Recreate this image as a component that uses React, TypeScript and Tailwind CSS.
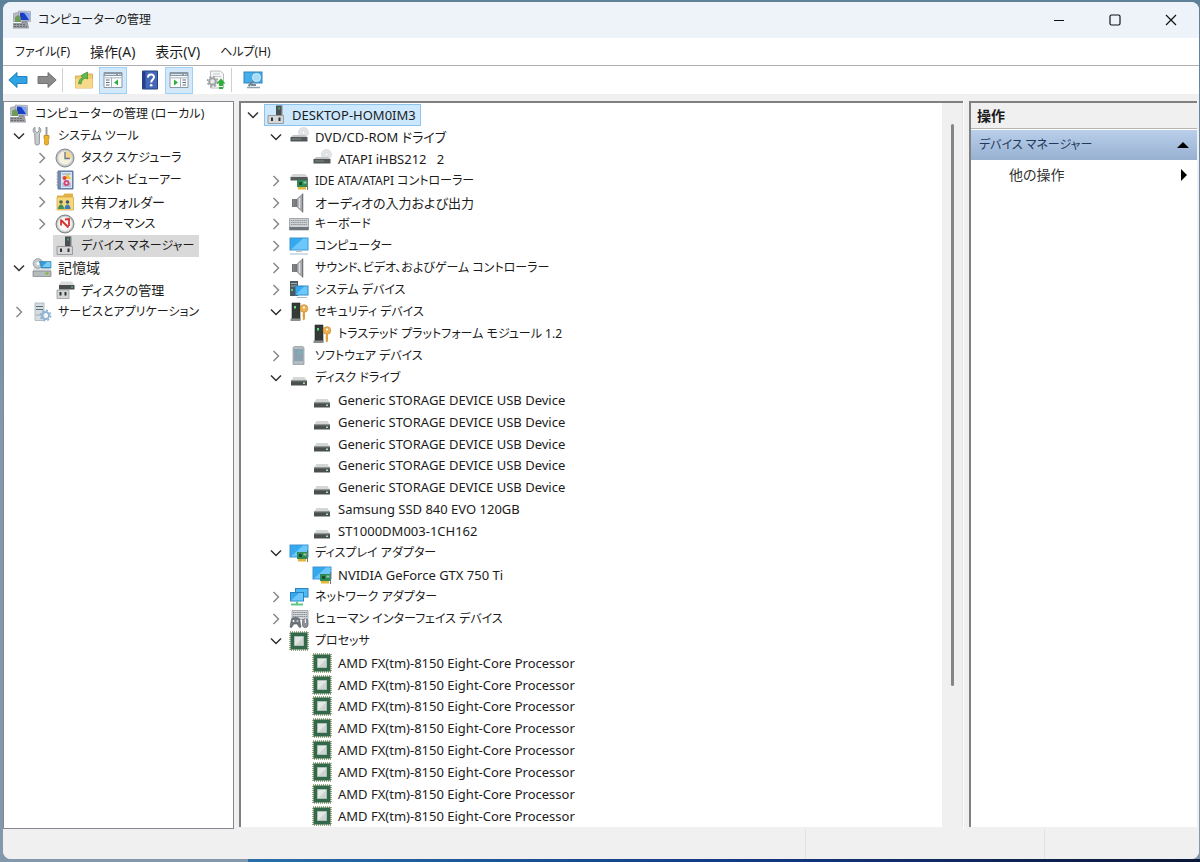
import React from 'react';
import clsx from 'clsx';

type IconName =
  | 'console' | 'tools' | 'clock' | 'event' | 'shared' | 'perf' | 'device' | 'storage' | 'diskmgmt' | 'services'
  | 'dvd' | 'ide' | 'speaker' | 'keyboard' | 'monitor' | 'system' | 'security' | 'software' | 'disk' | 'display'
  | 'network' | 'hid' | 'cpu' | 'back' | 'forward' | 'folderUp' | 'paneLeft' | 'help' | 'paneRight' | 'update' | 'scan';

type State = 'open' | 'closed' | 'leaf';
type Size = 12 | 13 | 14;

interface TreeNode {
  level: number;
  icon: IconName;
  label: string;
  state: State;
  size?: Size;
  selected?: boolean;
}

const TEXT: Record<Size, string> = { 12: 'text-[12px]', 13: 'text-[13px]', 14: 'text-[14px]' };

const device = (
  <>
    <path d="M10 0.5h6v10h-6z" fill="#4c4f52" />
    <path d="M12 2.5h2v2h-2z" fill="#3fa46a" />
    <path d="M15 0.5h1.5v10H15z" fill="#7b7e80" />
    <path d="M2 10.5h15.5v8H2z" fill="#d4d6d7" stroke="#8a8d8f" strokeWidth="0.8" />
    <path d="M5 12.5h2v3.5H5zM12.5 12.5h2v3.5h-2z" fill="#303335" />
  </>
);

const consoleIcon = (
  <>
    <path d="M6.5 1l12 .5v10l-12-.5z" fill="#c9cdd6" stroke="#8b909c" strokeWidth="0.6" />
    <path d="M8 2.5l9.2.4v7.4L8 10z" fill="#1a3fc4" />
    <path d="M12 2.7l5.2.2v7.4z" fill="#7fa6f0" />
    <path d="M1.5 3.5l4-1 1.5 1v8H1.5z" fill="#b9bcc3" stroke="#7d8088" strokeWidth="0.5" />
    <path d="M3 7l3-2 3 2.5V12H3z" fill="#6f9a58" />
    <path d="M10 11h5l1 2h-7z" fill="#8f939b" />
    <path d="M1 13h15l1 5.5H1z" fill="#9a9da1" />
    <path d="M2 14.5h12M2 16.5h13" stroke="#686b6f" strokeDasharray="2 1" />
  </>
);

const screen = (
  <>
    <path d="M.5 1.500h19v13H.5z" fill="#3f93cd" />
    <path d="M1.500 2.500h17v11h-17z" fill="#35a9ee" />
    <path d="M2 13.500L14 2.500h4.500v11z" fill="#6cc8fa" />
  </>
);

const card = (
  <>
    <path d="M8 9h11v7H8z" fill="#2f8a55" />
    <path d="M10 11h3v3h-3z" fill="#1a4d32" />
    <path d="M14.5 10.5h3v2h-3z" fill="#8ed0a4" />
    <path d="M9 16h8v2.5H9z" fill="#e2b638" />
    <path d="M18.5 7v12" stroke="#6d7478" />
  </>
);

const drive = (
  <>
    <path d="M4.500 9h11l2.500 4H2z" fill="#d3d7d5" />
    <path d="M2 12.500h16v5H2z" fill="#4a504f" />
    <path d="M2 12.800h16" stroke="#929896" />
    <path d="M14 15.200h2" stroke="#a5e0b8" strokeWidth="1.500" />
  </>
);

const paneFrame = (
  <>
    <path d="M1 2.5h18v15H1z" fill="#fbfcfd" stroke="#8b98a5" />
    <path d="M1 3h18v3H1z" fill="#8b98a5" />
    <path d="M2 4.5h11" stroke="#dbe3ea" />
    <path d="M15 4.5h3" stroke="#f3f6f8" strokeDasharray="1 0.6" />
    <path d="M1.500 7h17v1.500h-17z" fill="#c3cad1" />
  </>
);

const ICONS: Record<IconName, React.ReactNode> = {
  console: consoleIcon,
  device,
  tools: (
    <>
      <path d="M3 1.2v4l2 1.5 2-1.5v-4c2 1 2.6 4 .6 6.2L7.3 18c-.3 1.4-3.8 1.4-4.2 0L2.7 7.400C.4 5.500.7 2.200 3 1.200z" fill="#c8ccce" stroke="#808588" strokeWidth="0.8" />
      <path d="M13.500 1h2v9h-2z" fill="#9a9ea1" />
      <path d="M12 9.500h5v3l-.6 1v4.500c0 1.300-3.800 1.300-3.800 0v-4.500l-.6-1z" fill="#f0b429" stroke="#b87d12" strokeWidth="0.7" />
    </>
  ),
  clock: (
    <>
      <circle cx="10" cy="10" r="9" fill="#c0c4c8" stroke="#85898d" />
      <circle cx="10" cy="10" r="7" fill="#f5f1df" stroke="#d7d9da" />
      <path d="M10 10V3a7 7 0 0 1 7 7z" fill="#f3d58e" />
      <path d="M10 4v6.500h5" fill="none" stroke="#66758a" strokeWidth="1.300" />
    </>
  ),
  event: (
    <>
      <path d="M3 1h15v18H3z" fill="#6f8db8" stroke="#5d749a" />
      <path d="M6 2h11v16H6z" fill="#dbe5f3" />
      <path d="M7 4h9M7 14h9M7 16h9" stroke="#8da4c6" />
      <path d="M1.500 3h3M1.500 6h3M1.500 9h3M1.500 12h3M1.500 15h3" stroke="#8b9096" />
      <path d="M12.500 3.500l3.500 5.500h-6.500z" fill="#f2c42f" />
      <circle cx="9.500" cy="8" r="2" fill="#d8453a" />
      <circle cx="11.500" cy="13" r="3" fill="#d2487c" />
      <circle cx="11.500" cy="13" r="1" fill="#fff" />
    </>
  ),
  shared: (
    <>
      <path d="M2 3.500h6l1.500-2h8.500v5H2z" fill="#e2b34c" />
      <path d="M2 5h16.500v13H2z" fill="#f7d878" stroke="#d2a13d" strokeWidth="0.7" />
      <circle cx="6" cy="10" r="1.800" fill="#4a6a4e" />
      <path d="M3 17c0-6 6-6 6 0z" fill="#3f8f5a" />
      <circle cx="12.500" cy="10" r="1.800" fill="#35577f" />
      <path d="M9.500 17c0-6 6-6 6 0z" fill="#3c7cbc" />
    </>
  ),
  perf: (
    <>
      <circle cx="10" cy="10" r="9" fill="#b8bbbd" stroke="#7d8082" />
      <circle cx="10" cy="10" r="7.200" fill="#fbf7f6" stroke="#e1e3e4" />
      <path d="M6 5.500v6M6 6l7.500 7.500M10 5.500l4-.5v7" fill="none" stroke="#d5302b" strokeWidth="1.800" />
    </>
  ),
  storage: (
    <>
      <path d="M2 9h16l1 4.500H1z" fill="#dfe2e3" />
      <path d="M1 13h18v5.500H1z" fill="#b5babc" stroke="#7b8083" strokeWidth="0.7" />
      <path d="M13.500 14.500h3v2h-3z" fill="#7fb832" />
      <circle cx="6" cy="5.500" r="4.800" fill="#c5ccd1" stroke="#9aa1a6" />
      <circle cx="6" cy="5.500" r="1.500" fill="#fff" />
      <path d="M7.500 3.500h11.500v6.500h-9.500z" fill="#2f9edb" stroke="#2578a8" strokeWidth="0.6" />
      <path d="M10 9l5-5h3.500v5z" fill="#7cc9f2" />
    </>
  ),
  diskmgmt: (
    <>
      <path d="M6 1.500h11l2 3.500H4z" fill="#d9dcdb" />
      <path d="M4 5h15.500v4.500H4z" fill="#484d4c" />
      <path d="M16 7h2" stroke="#63d68a" />
      <path d="M2 10h12v8.500H2z" fill="#d4d6d7" stroke="#8a8d8f" strokeWidth="0.7" />
      <path d="M4.500 12h2v3.500h-2zM9.500 12h2v3.500h-2z" fill="#303335" />
    </>
  ),
  services: (
    <>
      <path d="M3 1h9v17.500H3z" fill="#d5dde1" stroke="#a5b1b7" strokeWidth="0.8" />
      <path d="M4 4.500h7M4 7.500h7" stroke="#57707e" />
      <path d="M4 13h5" stroke="#9fb0b8" />
      <circle cx="13.500" cy="13.500" r="3.500" fill="none" stroke="#8fb3d0" strokeWidth="2" />
      <circle cx="13.500" cy="13.500" r="5.200" fill="none" stroke="#8fb3d0" strokeWidth="1.500" strokeDasharray="2 2.080" />
      <circle cx="13.500" cy="13.500" r="1.600" fill="#edf4fa" />
    </>
  ),
  dvd: (
    <>
      <circle cx="14.500" cy="5.500" r="5" fill="#e3e4e8" stroke="#d0d2d7" strokeWidth="0.6" />
      <circle cx="14.500" cy="5.500" r="1.500" fill="#fff" stroke="#c0c2c7" strokeWidth="0.5" />
      <path d="M4 8h12l2.500 2.500h-17z" fill="#c2c5c5" />
      <path d="M1.500 10h17v4.500h-17z" fill="#515657" />
      <path d="M3 12h9" stroke="#838889" />
    </>
  ),
  ide: (
    <>
      <path d="M4 3h12l3 3H1z" fill="#d3d6d5" />
      <path d="M1.500 6h17v3.500h-17z" fill="#555b5a" />
      {card}
    </>
  ),
  speaker: (
    <>
      <path d="M3 6h5v8H3z" fill="#6d7174" />
      <path d="M8 6l6-5.500v19L8 14z" fill="#a6aaad" stroke="#7f8386" strokeWidth="0.6" />
      <path d="M4.500 6v8M6 6v8" stroke="#9da1a4" strokeWidth="0.5" />
      <path d="M10.500 5v10" stroke="#dee0e1" strokeWidth="1.500" />
      <path d="M13.500 1v18" stroke="#6f7376" />
    </>
  ),
  keyboard: (
    <>
      <path d="M.5 4.500h19v11.500H.5z" fill="#cfd3d6" stroke="#868c91" strokeWidth="0.7" />
      <path d="M2 6.500h16M2 8.500h16M2 10.500h16" stroke="#8f969b" strokeDasharray="1.500 0.600" />
      <path d="M.5 13h19v3H.5z" fill="#6e767b" />
    </>
  ),
  monitor: (
    <>
      {screen}
      <path d="M7 14.500h6v1.500H7z" fill="#b9c4cb" />
      <path d="M1 18h18" stroke="#a2bccd" />
    </>
  ),
  system: (
    <>
      <path d="M1 1h8v15H1z" fill="#4d585f" />
      <path d="M2 3.500h6M2 6h6" stroke="#a2aeb5" />
      <path d="M2 9h2v2H2z" fill="#5ccb83" />
      <path d="M6 5.500h13.500v10H6z" fill="#2f85bd" />
      <path d="M7 6.500h11.500v8H7z" fill="#35a9ee" />
      <path d="M7 14.500l8-8h3.500v8z" fill="#6cc8fa" />
      <path d="M8 17.500h10" stroke="#a2bccd" />
    </>
  ),
  security: (
    <>
      <path d="M3 1h8v17H3z" fill="#343a36" stroke="#22282a" strokeWidth="0.6" />
      <path d="M5 4h2v2.500H5z" fill="#5be07e" />
      <path d="M1.500 16.500h10V19h-10z" fill="#8a8f8d" />
      <circle cx="15" cy="6.500" r="3.800" fill="#ecb14c" stroke="#c98f3c" strokeWidth="0.8" />
      <circle cx="15" cy="5.500" r="1.100" fill="#fff" />
      <path d="M14 10h2v7l-1.200 1.500L13.500 17l.7-1-.7-1.500z" fill="#e2a03a" />
    </>
  ),
  software: (
    <>
      <path d="M4 1.500l1.500-1h8l1.500 1v17H4z" fill="#b4bcc1" stroke="#8b959b" strokeWidth="0.7" />
      <path d="M5 3h9v12H5z" fill="#8ba3b1" />
      <path d="M9.500 5h2v2h-2z" fill="#54c5dc" />
    </>
  ),
  disk: drive,
  display: (
    <>
      {screen}
      {card}
    </>
  ),
  network: (
    <>
      <path d="M6 1h13.500v9.500H6z" fill="#2a82bf" />
      <path d="M7 2h11.500v7.500H7z" fill="#4fb9f3" />
      <path d="M1 5h14v9.500H1z" fill="#2a82bf" />
      <path d="M2 6h12v7.500H2z" fill="#35a9ee" />
      <path d="M2 13.500L10 6h4v7.500z" fill="#6cc8fa" />
      <path d="M8 14.500v3.500M2 17.500h12" stroke="#5fc885" strokeWidth="2" />
    </>
  ),
  hid: (
    <>
      <path d="M3 1.500h16v9H3z" fill="#d5d8da" stroke="#8c9297" strokeWidth="0.7" />
      <path d="M4 3.500h14M4 5.500h14M4 7.500h14" stroke="#868c91" strokeDasharray="1.500 0.600" />
      <path d="M1 18l1.500-8c1-2 7-2 8 0L12 18c-1.500 1.500-3-1-3.500-3h-4C4 17 2.500 19.500 1 18z" fill="#70777c" stroke="#4a5055" strokeWidth="0.6" />
      <circle cx="4.500" cy="12" r="1" fill="#fff" />
      <circle cx="8.500" cy="12" r="1" fill="#c9cdd0" />
      <path d="M13.500 12c0-3 5.500-3 5.500 0v4c0 3.500-5.500 3.500-5.500 0z" fill="#8b9196" stroke="#50565b" strokeWidth="0.6" />
      <path d="M16.300 10v4" stroke="#fff" />
    </>
  ),
  cpu: (
    <>
      <path d="M1 1h18v18H1z" fill="none" stroke="#7f8f55" strokeWidth="1.500" strokeDasharray="1 1" />
      <path d="M1.500 1.500h17v17h-17z" fill="#33694a" />
      <path d="M5.500 5.500h9v9h-9z" fill="#e3e7e5" stroke="#a9c0b2" />
      <path d="M6.500 14l7.500-7.500V14z" fill="#cdd4d0" />
    </>
  ),
  back: <path d="M.8 10L9 2.500v4h10v7H9v4z" fill="#2ea3e6" stroke="#1c78b8" strokeWidth="0.9" />,
  forward: <path d="M19.200 10L11 2.500v4H1v7h10v4z" fill="#8b8b8b" stroke="#6a6a6a" strokeWidth="0.9" />,
  folderUp: (
    <>
      <path d="M1.500 6h7l1.500-2h8.500v14h-17z" fill="#f0cc6c" stroke="#cda241" strokeWidth="0.8" />
      <path d="M1.500 9h17v9h-17z" fill="#f7d98a" />
      <path d="M4.500 13.500c1-4.500 2.500-5.500 4.500-6L7 5.500l6.500-3.500v7l-2.300-1C8.500 9 7.500 11 7 14z" fill="#5fbf4a" stroke="#3f8a33" strokeWidth="0.7" />
    </>
  ),
  paneLeft: (
    <>
      {paneFrame}
      <path d="M3 10h3.500M3 12.500h3.500M3 15h3.500" stroke="#5c6b7a" />
      <path d="M8.500 8v9.500" stroke="#a7b1bb" />
      <path d="M15 9.500v6l-4-3z" fill="#2fae3b" />
    </>
  ),
  paneRight: (
    <>
      {paneFrame}
      <path d="M13.500 10H17M13.500 12.500H17M13.500 15H17" stroke="#5c6b7a" />
      <path d="M11.500 8v9.500" stroke="#a7b1bb" />
      <path d="M5 9.500v6l4-3z" fill="#2fae3b" />
    </>
  ),
  help: (
    <>
      <path d="M2.500 1h15v18h-15z" fill="#4467b8" stroke="#25418a" />
      <path d="M3 1.500h2.500v17H3z" fill="#24408c" />
      <path d="M8 7.500c0-4 6-4 6-.5 0 2.500-2.800 2.500-2.800 5.500" fill="none" stroke="#fff" strokeWidth="2" />
      <circle cx="11.200" cy="15.300" r="1.300" fill="#fff" />
    </>
  ),
  update: (
    <>
      <path d="M4.500 1h10l3 3v14h-13z" fill="#f4f5f5" stroke="#a8abad" strokeWidth="0.8" />
      <path d="M7 4h7M7 6.500h8" stroke="#c5c8ca" />
      <circle cx="6.500" cy="11.500" r="3.300" fill="#e8eaeb" stroke="#9da1a3" strokeWidth="2" />
      <circle cx="6.500" cy="11.500" r="5" fill="none" stroke="#9da1a3" strokeWidth="1.500" strokeDasharray="2 1.930" />
      <path d="M15 8.500l4.500 5h-2.500v2.500h-4v-2.500h-2.500zM13 17h4v2h-4z" fill="#2fae3b" />
    </>
  ),
  scan: (
    <>
      <path d="M.5 1.500h19v12H.5z" fill="#2f86bd" />
      <path d="M1.500 2.500h17v10h-17z" fill="#45aeea" />
      <circle cx="13.500" cy="7.500" r="4" fill="#a5dbf7" stroke="#d0eafa" />
      <path d="M10.500 11L5.500 16" stroke="#78828a" strokeWidth="2" />
      <path d="M8 14h5v2H8z" fill="#7d8d98" />
      <path d="M4 17.500h13" stroke="#93a4b0" strokeWidth="1.400" />
    </>
  ),
};

const Icon = ({ name }: { name: IconName }) => (
  <svg viewBox="0 0 20 20" className="size-5 shrink-0" aria-hidden="true">
    {ICONS[name]}
  </svg>
);

const leftTree: TreeNode[] = [
  { level: 0, icon: 'console', label: 'コンピューターの管理 (ローカル)', state: 'leaf', size: 12 },
  { level: 0, icon: 'tools', label: 'システム ツール', state: 'open', size: 12 },
  { level: 1, icon: 'clock', label: 'タスク スケジューラ', state: 'closed', size: 12 },
  { level: 1, icon: 'event', label: 'イベント ビューアー', state: 'closed', size: 12 },
  { level: 1, icon: 'shared', label: '共有フォルダー', state: 'closed' },
  { level: 1, icon: 'perf', label: 'パフォーマンス', state: 'closed', size: 12 },
  { level: 1, icon: 'device', label: 'デバイス マネージャー', state: 'leaf', size: 12, selected: true },
  { level: 0, icon: 'storage', label: '記憶域', state: 'open', size: 14 },
  { level: 1, icon: 'diskmgmt', label: 'ディスクの管理', state: 'leaf' },
  { level: 0, icon: 'services', label: 'サービスとアプリケーション', state: 'closed', size: 12 },
];

const usbDisk: TreeNode = { level: 2, icon: 'disk', label: 'Generic STORAGE DEVICE USB Device', state: 'leaf' };
const core: TreeNode = { level: 2, icon: 'cpu', label: 'AMD FX(tm)-8150 Eight-Core Processor', state: 'leaf' };

const deviceTree: TreeNode[] = [
  { level: 0, icon: 'device', label: 'DESKTOP-HOM0IM3', state: 'open', selected: true },
  { level: 1, icon: 'dvd', label: 'DVD/CD-ROM ドライブ', state: 'open' },
  { level: 2, icon: 'dvd', label: 'ATAPI iHBS212   2', state: 'leaf' },
  { level: 1, icon: 'ide', label: 'IDE ATA/ATAPI コントローラー', state: 'closed', size: 12 },
  { level: 1, icon: 'speaker', label: 'オーディオの入力および出力', state: 'closed' },
  { level: 1, icon: 'keyboard', label: 'キーボード', state: 'closed', size: 12 },
  { level: 1, icon: 'monitor', label: 'コンピューター', state: 'closed', size: 12 },
  { level: 1, icon: 'speaker', label: 'サウンド、ビデオ、およびゲーム コントローラー', state: 'closed', size: 12 },
  { level: 1, icon: 'system', label: 'システム デバイス', state: 'closed', size: 12 },
  { level: 1, icon: 'security', label: 'セキュリティ デバイス', state: 'open', size: 12 },
  { level: 2, icon: 'security', label: 'トラステッド プラットフォーム モジュール 1.2', state: 'leaf', size: 12 },
  { level: 1, icon: 'software', label: 'ソフトウェア デバイス', state: 'closed', size: 12 },
  { level: 1, icon: 'disk', label: 'ディスク ドライブ', state: 'open', size: 12 },
  ...Array<TreeNode>(5).fill(usbDisk),
  { level: 2, icon: 'disk', label: 'Samsung SSD 840 EVO 120GB', state: 'leaf' },
  { level: 2, icon: 'disk', label: 'ST1000DM003-1CH162', state: 'leaf' },
  { level: 1, icon: 'display', label: 'ディスプレイ アダプター', state: 'open', size: 12 },
  { level: 2, icon: 'display', label: 'NVIDIA GeForce GTX 750 Ti', state: 'leaf' },
  { level: 1, icon: 'network', label: 'ネットワーク アダプター', state: 'closed', size: 12 },
  { level: 1, icon: 'hid', label: 'ヒューマン インターフェイス デバイス', state: 'closed', size: 12 },
  { level: 1, icon: 'cpu', label: 'プロセッサ', state: 'open', size: 12 },
  ...Array<TreeNode>(8).fill(core),
];

const INDENT = ['pl-0', 'pl-[23px]', 'pl-[46px]'];

const Chevron = ({ node }: { node: TreeNode }) => {
  if (node.state === 'leaf') return <span className="w-[23px] shrink-0" />;
  const open = node.state === 'open';
  return (
    <button
      type="button"
      aria-label={`${node.label} ${open ? '折りたたむ' : '展開'}`}
      className="flex w-[23px] shrink-0 justify-center"
    >
      <svg viewBox="0 0 12 12" className="size-3" fill="none">
        {open ? (
          <path d="M1 3.5l5 5 5-5" stroke="#303030" strokeWidth="1.5" />
        ) : (
          <path d="M3.5 1l5 5-5 5" stroke="#8a8a8a" strokeWidth="1.5" />
        )}
      </svg>
    </button>
  );
};

interface TreeProps {
  nodes: TreeNode[];
  label: string;
  focused?: boolean;
}

const Tree = ({ nodes, label, focused }: TreeProps) => (
  <ul role="tree" aria-label={label} className="flex h-full min-w-0 flex-1 flex-col pt-px">
    {nodes.map((node, i) => (
      <li
        key={i}
        role="treeitem"
        aria-selected={!!node.selected}
        className={clsx('flex h-[22px] min-h-5 items-center', INDENT[node.level])}
      >
        {/* The console root has no expander column */}
        {!(i === 0 && node.state === 'leaf') && <Chevron node={node} />}
        <span
          className={clsx(
            'flex h-full items-center gap-1.5 border pl-px pr-1',
            !node.selected && 'border-transparent',
            node.selected && (focused ? 'border-[#8cc4ee] bg-[#cce8ff]' : 'border-[#d9d9d9] bg-[#d9d9d9]')
          )}
        >
          <Icon name={node.icon} />
          <span className={clsx('whitespace-pre', TEXT[node.size ?? 13])}>{node.label}</span>
        </span>
      </li>
    ))}
  </ul>
);

const ToolButton = ({ icon, label, active }: { icon: IconName; label: string; active?: boolean }) => (
  <button
    type="button"
    aria-label={label}
    className={clsx(
      'flex h-[27px] w-7 items-center justify-center border',
      active ? 'border-[#9fd0f5] bg-[#d3e9fa]' : 'border-transparent'
    )}
  >
    <Icon name={icon} />
  </button>
);

const Separator = () => <span className="mr-1.5 h-6 w-px bg-[#d0d0d0]" />;

const TitleBar = () => (
  <header className="flex h-9 shrink-0 items-center bg-[#eef3fa] pl-[9px]">
    <Icon name="console" />
    <h1 className="ml-1.5 flex-1 text-[12px]">コンピューターの管理</h1>
    <button type="button" aria-label="最小化" className="flex h-full w-14 items-center justify-center">
      <svg viewBox="0 0 12 12" className="size-3" fill="none" stroke="#111">
        <path d="M1 6.5h10" />
      </svg>
    </button>
    <button type="button" aria-label="最大化" className="flex h-full w-14 items-center justify-center">
      <svg viewBox="0 0 12 12" className="size-3" fill="none" stroke="#111" strokeWidth="1.2">
        <rect x="1" y="1" width="10" height="10" rx="1.5" />
      </svg>
    </button>
    <button type="button" aria-label="閉じる" className="flex h-full w-14 items-center justify-center">
      <svg viewBox="0 0 12 12" className="size-3" fill="none" stroke="#111" strokeWidth="1.2">
        <path d="M1 1l10 10M11 1L1 11" />
      </svg>
    </button>
  </header>
);

const menus: { label: string; size: Size }[] = [
  { label: 'ファイル(F)', size: 12 },
  { label: '操作(A)', size: 14 },
  { label: '表示(V)', size: 14 },
  { label: 'ヘルプ(H)', size: 12 },
];

const MenuBar = () => (
  <nav className="flex h-7 shrink-0 items-center gap-5 border-b border-[#b0b0b0] bg-white pl-3">
    {menus.map((menu) => (
      <button key={menu.label} type="button" className={TEXT[menu.size]}>
        {menu.label}
      </button>
    ))}
  </nav>
);

const ToolBar = () => (
  <div role="toolbar" className="flex h-7 shrink-0 items-center gap-px bg-white pl-px">
    <ToolButton icon="back" label="戻る" />
    <ToolButton icon="forward" label="進む" />
    <Separator />
    <ToolButton icon="folderUp" label="1 つ上のレベルへ" />
    <ToolButton icon="paneLeft" label="コンソール ツリーの表示" active />
    <span className="w-[7px]" />
    <ToolButton icon="help" label="ヘルプ" />
    <ToolButton icon="paneRight" label="操作ウィンドウの表示" active />
    <span className="w-[7px]" />
    <ToolButton icon="update" label="ドライバーの更新" />
    <Separator />
    <ToolButton icon="scan" label="ハードウェア変更のスキャン" />
  </div>
);

const ActionsPane = () => (
  <aside className="mb-0.5 flex w-[228px] shrink-0 flex-col border-l-2 border-t-2 border-[#808080] bg-white">
    <h2 className="flex h-[26px] items-center border-b border-[#b4b4b4] bg-[#f0f0f0] pl-1.5 text-[14px] font-bold">操作</h2>
    <button
      type="button"
      className="mt-px flex h-[30px] items-center justify-between bg-linear-to-b from-[#b9cfeb] to-[#98b1d1] px-2 text-[12px] text-[#1e395b]"
    >
      デバイス マネージャー
      <svg viewBox="0 0 12 12" className="size-3">
        <path d="M0 9l6-6 6 6z" fill="#000" />
      </svg>
    </button>
    <button type="button" className="flex h-[30px] items-center justify-between pl-[38px] pr-[7px] text-[14px] text-[#333]">
      他の操作
      <svg viewBox="0 0 12 12" className="size-3">
        <path d="M3 0l6 6-6 6z" fill="#000" />
      </svg>
    </button>
  </aside>
);

const StatusBar = () => (
  <footer className="flex h-[30px] shrink-0 bg-[#f0f0f0]">
    <span className="flex-1" />
    <span className="w-[239px] border-l border-[#e2e2e2]" />
    <span className="w-[155px] border-l border-[#e2e2e2]" />
  </footer>
);

const App = () => (
  <div className="flex h-screen flex-col bg-linear-to-b from-[#5d8199] via-[#8298ae] to-[#8498ac] pt-0.5 text-[13px] leading-5 text-[#1b1b1b] [font-feature-settings:'palt'] font-['Noto_Sans','Noto_Sans_CJK_JP',sans-serif]">
    <div className="mr-px ml-[3px] flex min-h-0 flex-1 flex-col overflow-hidden rounded-lg bg-[#f0f0f0]">
      <TitleBar />
      <MenuBar />
      <ToolBar />
      <main className="flex min-h-0 flex-1 pt-[7px] pr-0.5">
        <section className="flex w-[231px] shrink-0 border border-[#828790] bg-white pl-[3px]">
          <Tree nodes={leftTree} label="コンソール ツリー" />
        </section>
        <section className="mb-0.5 ml-[5px] flex min-w-0 flex-1 border-l-2 border-t-2 border-[#808080] bg-white">
          <Tree nodes={deviceTree} label="デバイス" focused />
          <div className="flex w-[21px] justify-center border-r border-[#e4e4e4] bg-[#f0f0f0] pt-[21px]">
            <span className="h-[80%] w-[3px] rounded-full bg-[#868686]" />
          </div>
        </section>
        <span className="w-1.5 shrink-0 border-l border-white" />
        <ActionsPane />
      </main>
      <StatusBar />
    </div>
    <div className="flex h-[3px] shrink-0">
      <span className="w-[248px]" />
      <span className="flex-1 bg-linear-to-r from-[#2a6ea8] via-[#123a86] to-[#0a1636]" />
    </div>
  </div>
);

export default App;
